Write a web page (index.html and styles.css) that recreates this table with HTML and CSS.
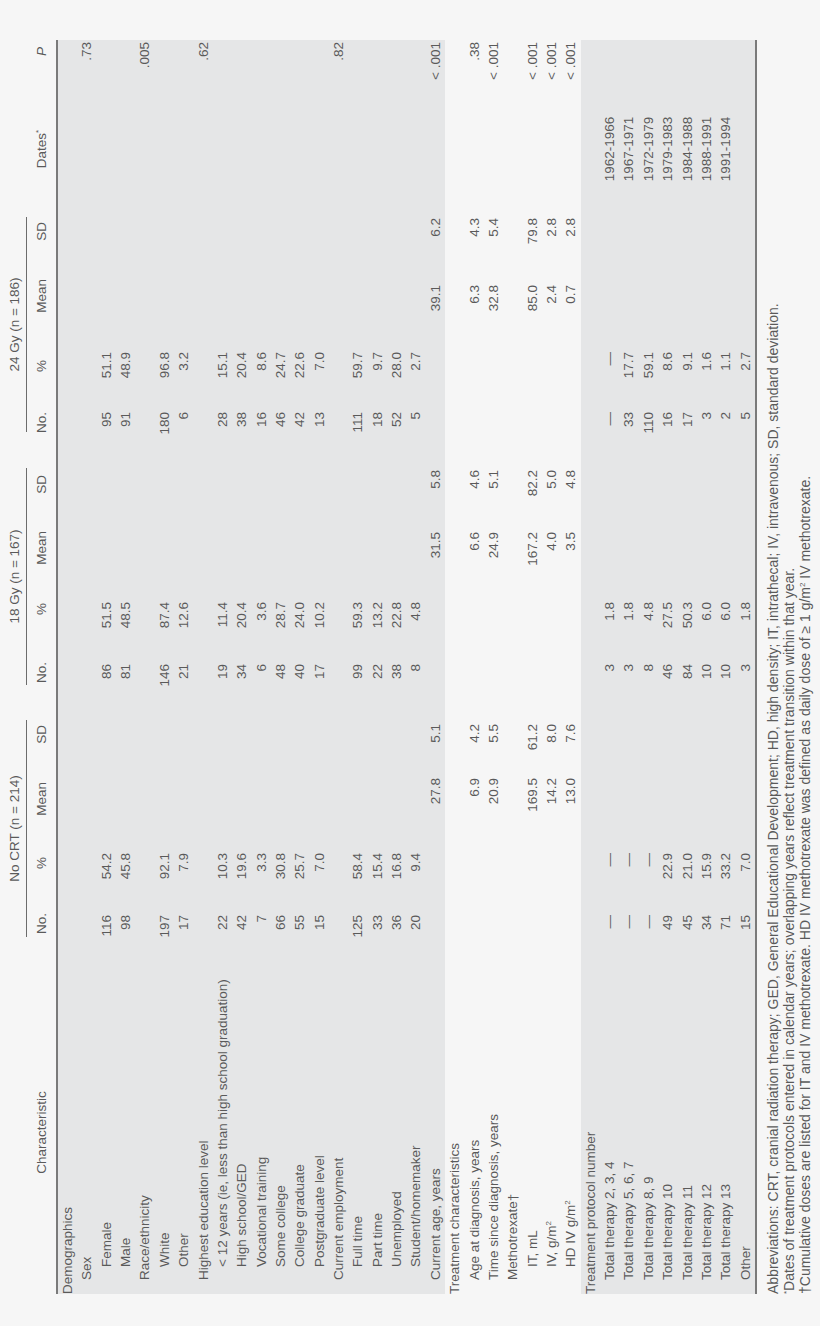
FILE: index.html
```html
<!DOCTYPE html>
<html lang="en">
<head>
<meta charset="utf-8">
<title>Table</title>
<link rel="stylesheet" href="styles.css">
</head>
<body>
<div class="page">
<div class="sheet">
  <div class="ghead">
    <span></span>
    <span class="glabel g1">No CRT (n = 214)</span>
    <span></span>
    <span class="glabel g2">18 Gy (n = 167)</span>
    <span></span>
    <span class="glabel g3">24 Gy (n = 186)</span>
  </div>
  <div class="shead">
    <span class="hch">Characteristic</span>
    <span>No.</span><span>%</span><span>Mean</span><span>SD</span>
    <span></span>
    <span>No.</span><span>%</span><span>Mean</span><span>SD</span>
    <span></span>
    <span>No.</span><span>%</span><span>Mean</span><span>SD</span>
    <span class="hdates">Dates<sup>*</sup></span>
    <span class="hp">P</span>
  </div>
  <div class="rule"></div>

  <div class="sec shade">
    <div class="row"><span class="ch">Demographics</span><span></span><span></span><span></span><span></span><span></span><span></span><span></span><span></span><span></span><span></span><span></span><span></span><span></span><span></span><span></span><span></span></div>
    <div class="row"><span class="ch l1">Sex</span><span></span><span></span><span></span><span></span><span></span><span></span><span></span><span></span><span></span><span></span><span></span><span></span><span></span><span></span><span></span><span>.73</span></div>
    <div class="row"><span class="ch l2">Female</span><span>116</span><span>54.2</span><span></span><span></span><span></span><span>86</span><span>51.5</span><span></span><span></span><span></span><span>95</span><span>51.1</span><span></span><span></span><span></span><span></span></div>
    <div class="row"><span class="ch l2">Male</span><span>98</span><span>45.8</span><span></span><span></span><span></span><span>81</span><span>48.5</span><span></span><span></span><span></span><span>91</span><span>48.9</span><span></span><span></span><span></span><span></span></div>
    <div class="row"><span class="ch l1">Race/ethnicity</span><span></span><span></span><span></span><span></span><span></span><span></span><span></span><span></span><span></span><span></span><span></span><span></span><span></span><span></span><span></span><span>.005</span></div>
    <div class="row"><span class="ch l2">White</span><span>197</span><span>92.1</span><span></span><span></span><span></span><span>146</span><span>87.4</span><span></span><span></span><span></span><span>180</span><span>96.8</span><span></span><span></span><span></span><span></span></div>
    <div class="row"><span class="ch l2">Other</span><span>17</span><span>7.9</span><span></span><span></span><span></span><span>21</span><span>12.6</span><span></span><span></span><span></span><span>6</span><span>3.2</span><span></span><span></span><span></span><span></span></div>
    <div class="row"><span class="ch l1">Highest education level</span><span></span><span></span><span></span><span></span><span></span><span></span><span></span><span></span><span></span><span></span><span></span><span></span><span></span><span></span><span></span><span>.62</span></div>
    <div class="row"><span class="ch l2">&lt; 12 years (ie, less than high school graduation)</span><span>22</span><span>10.3</span><span></span><span></span><span></span><span>19</span><span>11.4</span><span></span><span></span><span></span><span>28</span><span>15.1</span><span></span><span></span><span></span><span></span></div>
    <div class="row"><span class="ch l2">High school/GED</span><span>42</span><span>19.6</span><span></span><span></span><span></span><span>34</span><span>20.4</span><span></span><span></span><span></span><span>38</span><span>20.4</span><span></span><span></span><span></span><span></span></div>
    <div class="row"><span class="ch l2">Vocational training</span><span>7</span><span>3.3</span><span></span><span></span><span></span><span>6</span><span>3.6</span><span></span><span></span><span></span><span>16</span><span>8.6</span><span></span><span></span><span></span><span></span></div>
    <div class="row"><span class="ch l2">Some college</span><span>66</span><span>30.8</span><span></span><span></span><span></span><span>48</span><span>28.7</span><span></span><span></span><span></span><span>46</span><span>24.7</span><span></span><span></span><span></span><span></span></div>
    <div class="row"><span class="ch l2">College graduate</span><span>55</span><span>25.7</span><span></span><span></span><span></span><span>40</span><span>24.0</span><span></span><span></span><span></span><span>42</span><span>22.6</span><span></span><span></span><span></span><span></span></div>
    <div class="row"><span class="ch l2">Postgraduate level</span><span>15</span><span>7.0</span><span></span><span></span><span></span><span>17</span><span>10.2</span><span></span><span></span><span></span><span>13</span><span>7.0</span><span></span><span></span><span></span><span></span></div>
    <div class="row"><span class="ch l1">Current employment</span><span></span><span></span><span></span><span></span><span></span><span></span><span></span><span></span><span></span><span></span><span></span><span></span><span></span><span></span><span></span><span>.82</span></div>
    <div class="row"><span class="ch l2">Full time</span><span>125</span><span>58.4</span><span></span><span></span><span></span><span>99</span><span>59.3</span><span></span><span></span><span></span><span>111</span><span>59.7</span><span></span><span></span><span></span><span></span></div>
    <div class="row"><span class="ch l2">Part time</span><span>33</span><span>15.4</span><span></span><span></span><span></span><span>22</span><span>13.2</span><span></span><span></span><span></span><span>18</span><span>9.7</span><span></span><span></span><span></span><span></span></div>
    <div class="row"><span class="ch l2">Unemployed</span><span>36</span><span>16.8</span><span></span><span></span><span></span><span>38</span><span>22.8</span><span></span><span></span><span></span><span>52</span><span>28.0</span><span></span><span></span><span></span><span></span></div>
    <div class="row"><span class="ch l2">Student/homemaker</span><span>20</span><span>9.4</span><span></span><span></span><span></span><span>8</span><span>4.8</span><span></span><span></span><span></span><span>5</span><span>2.7</span><span></span><span></span><span></span><span></span></div>
    <div class="row"><span class="ch l1">Current age, years</span><span></span><span></span><span>27.8</span><span>5.1</span><span></span><span></span><span></span><span>31.5</span><span>5.8</span><span></span><span></span><span></span><span>39.1</span><span>6.2</span><span></span><span>&lt; .001</span></div>
  </div>

  <div class="sec">
    <div class="row"><span class="ch">Treatment characteristics</span><span></span><span></span><span></span><span></span><span></span><span></span><span></span><span></span><span></span><span></span><span></span><span></span><span></span><span></span><span></span><span></span></div>
    <div class="row"><span class="ch l1">Age at diagnosis, years</span><span></span><span></span><span>6.9</span><span>4.2</span><span></span><span></span><span></span><span>6.6</span><span>4.6</span><span></span><span></span><span></span><span>6.3</span><span>4.3</span><span></span><span>.38</span></div>
    <div class="row"><span class="ch l1">Time since diagnosis, years</span><span></span><span></span><span>20.9</span><span>5.5</span><span></span><span></span><span></span><span>24.9</span><span>5.1</span><span></span><span></span><span></span><span>32.8</span><span>5.4</span><span></span><span>&lt; .001</span></div>
    <div class="row"><span class="ch l1">Methotrexate†</span><span></span><span></span><span></span><span></span><span></span><span></span><span></span><span></span><span></span><span></span><span></span><span></span><span></span><span></span><span></span><span></span></div>
    <div class="row"><span class="ch l2">IT, mL</span><span></span><span></span><span>169.5</span><span>61.2</span><span></span><span></span><span></span><span>167.2</span><span>82.2</span><span></span><span></span><span></span><span>85.0</span><span>79.8</span><span></span><span>&lt; .001</span></div>
    <div class="row"><span class="ch l2">IV, g/m<sup>2</sup></span><span></span><span></span><span>14.2</span><span>8.0</span><span></span><span></span><span></span><span>4.0</span><span>5.0</span><span></span><span></span><span></span><span>2.4</span><span>2.8</span><span></span><span>&lt; .001</span></div>
    <div class="row"><span class="ch l2">HD IV g/m<sup>2</sup></span><span></span><span></span><span>13.0</span><span>7.6</span><span></span><span></span><span></span><span>3.5</span><span>4.8</span><span></span><span></span><span></span><span>0.7</span><span>2.8</span><span></span><span>&lt; .001</span></div>
  </div>

  <div class="sec shade">
    <div class="row"><span class="ch">Treatment protocol number</span><span></span><span></span><span></span><span></span><span></span><span></span><span></span><span></span><span></span><span></span><span></span><span></span><span></span><span></span><span></span><span></span></div>
    <div class="row"><span class="ch l1">Total therapy 2, 3, 4</span><span>—</span><span>—</span><span></span><span></span><span></span><span>3</span><span>1.8</span><span></span><span></span><span></span><span>—</span><span>—</span><span></span><span></span><span class="date">1962-1966</span><span></span></div>
    <div class="row"><span class="ch l1">Total therapy 5, 6, 7</span><span>—</span><span>—</span><span></span><span></span><span></span><span>3</span><span>1.8</span><span></span><span></span><span></span><span>33</span><span>17.7</span><span></span><span></span><span class="date">1967-1971</span><span></span></div>
    <div class="row"><span class="ch l1">Total therapy 8, 9</span><span>—</span><span>—</span><span></span><span></span><span></span><span>8</span><span>4.8</span><span></span><span></span><span></span><span>110</span><span>59.1</span><span></span><span></span><span class="date">1972-1979</span><span></span></div>
    <div class="row"><span class="ch l1">Total therapy 10</span><span>49</span><span>22.9</span><span></span><span></span><span></span><span>46</span><span>27.5</span><span></span><span></span><span></span><span>16</span><span>8.6</span><span></span><span></span><span class="date">1979-1983</span><span></span></div>
    <div class="row"><span class="ch l1">Total therapy 11</span><span>45</span><span>21.0</span><span></span><span></span><span></span><span>84</span><span>50.3</span><span></span><span></span><span></span><span>17</span><span>9.1</span><span></span><span></span><span class="date">1984-1988</span><span></span></div>
    <div class="row"><span class="ch l1">Total therapy 12</span><span>34</span><span>15.9</span><span></span><span></span><span></span><span>10</span><span>6.0</span><span></span><span></span><span></span><span>3</span><span>1.6</span><span></span><span></span><span class="date">1988-1991</span><span></span></div>
    <div class="row"><span class="ch l1">Total therapy 13</span><span>71</span><span>33.2</span><span></span><span></span><span></span><span>10</span><span>6.0</span><span></span><span></span><span></span><span>2</span><span>1.1</span><span></span><span></span><span class="date">1991-1994</span><span></span></div>
    <div class="row"><span class="ch l1">Other</span><span>15</span><span>7.0</span><span></span><span></span><span></span><span>3</span><span>1.8</span><span></span><span></span><span></span><span>5</span><span>2.7</span><span></span><span></span><span></span><span></span></div>
  </div>
  <div class="rule"></div>

  <div class="notes">
    <p>Abbreviations: CRT, cranial radiation therapy; GED, General Educational Development; HD, high density; IT, intrathecal; IV, intravenous; SD, standard deviation.</p>
    <p><sup>*</sup>Dates of treatment protocols entered in calendar years; overlapping years reflect treatment transition within that year.</p>
    <p>†Cumulative doses are listed for IT and IV methotrexate. HD IV methotrexate was defined as daily dose of ≥ 1 g/m<sup>2</sup> IV methotrexate.</p>
  </div>
</div>
</div>
</body>
</html>
```

FILE: styles.css
```css
html, body {
  margin: 0;
  padding: 0;
  background: #f6f6f6;
}

.page {
  width: 820px;
  height: 1326px;
  overflow: hidden;
}

.sheet {
  --cols: 349px 32px 62px 75px 56px 27px 31px 62px 70px 62px 28px 30px 60px 72px 61px 136px 41px;
  width: 1326px;
  height: 820px;
  box-sizing: border-box;
  padding: 0 40px 0 32px;
  transform-origin: 0 0;
  transform: translateY(1326px) rotate(-90deg);
  font-family: "Liberation Sans", Arial, sans-serif;
  font-size: 13.5px;
  color: #5a5a5a;
}

sup {
  font-size: 8px;
  line-height: 0;
  vertical-align: 5px;
}

/* group header */
.ghead {
  display: grid;
  grid-template-columns: 349px 225px 27px 225px 28px 223px 177px;
  height: 27px;
}
.glabel {
  margin-left: 8px;
  padding-top: 5px;
  line-height: 20px;
  text-align: center;
  border-bottom: 1px solid #6c6c6c;
}

/* sub header */
.shead {
  display: grid;
  grid-template-columns: var(--cols);
  height: 29px;
  box-sizing: border-box;
  padding-top: 5px;
  line-height: 20px;
}
.shead > span {
  text-align: right;
  white-space: nowrap;
}
.shead > span:nth-child(3) { padding-right: 6px; }
.shead > span:nth-child(4) { padding-right: 6px; }
.shead > span:nth-child(5) { padding-right: 5px; }
.shead > span:nth-child(8) { padding-right: 3px; }
.shead > span:nth-child(9) { padding-right: 1px; }
.shead > span:nth-child(10) { padding-right: 7px; }
.shead > span:nth-child(12) { padding-right: 2px; }
.shead > span:nth-child(13) { padding-right: 10px; }
.shead > span:nth-child(14) { padding-right: 1px; }
.shead > span:nth-child(15) { padding-right: 5px; }
.shead > .hch {
  text-align: center;
  padding-right: 26px;
}
.shead > .hdates {
  text-align: center;
}
.shead > .hp {
  font-style: italic;
  padding-right: 7px;
}

.rule {
  height: 2px;
  background: #7a7a7a;
}

.sec.shade {
  background: #e5e6e7;
}

.row {
  display: grid;
  grid-template-columns: var(--cols);
  height: 19.36px;
  line-height: 19.36px;
}
.row > span {
  text-align: right;
  padding-right: 2px;
  white-space: nowrap;
}
.row > span:nth-child(5) { padding-right: 4px; }
.row > span:nth-child(14) { padding-right: 7px; }
.row > span:nth-child(15) { padding-right: 1px; }
.row > span.ch {
  text-align: left;
  padding-right: 0;
}
.row > span.date {
  text-align: center;
  padding-right: 0;
}
.row > .l1 { padding-left: 14px; }
.row > .l2 { padding-left: 27px; }

.notes {
  padding-top: 8px;
  font-size: 14px;
  line-height: 16px;
}
.notes p {
  margin: 0;
  white-space: nowrap;
}
```
